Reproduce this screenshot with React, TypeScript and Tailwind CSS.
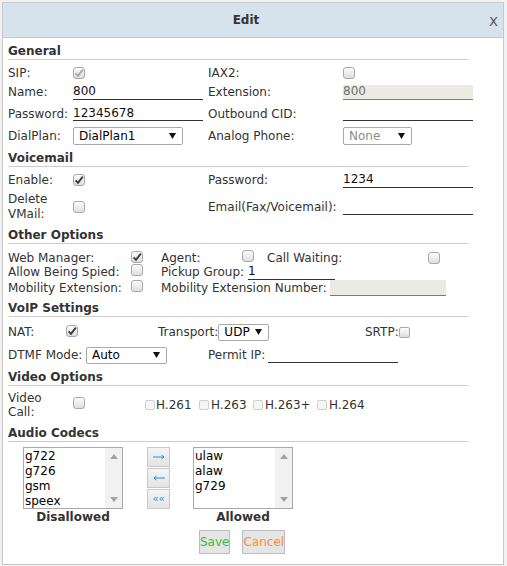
import React from "react";

type BoxProps = { checked?: boolean; dim?: boolean };

// checkbox as drawn in the old chrome skin
const Box = ({ checked, dim }: BoxProps) => (
  <span className="inline-flex h-[12px] w-[12px] shrink-0 items-center justify-center rounded-[3px] border border-[#a9a9a9] bg-linear-to-b from-[#fcfcfc] to-[#dedede]">
    {checked && (
      <svg width="10" height="10" viewBox="0 0 10 10">
        <path
          d="M1.6 5.4 L4 7.9 L8.8 1.6"
          fill="none"
          stroke={dim ? "#a9a9a9" : "#3b3b3b"}
          strokeWidth="1.9"
        />
      </svg>
    )}
  </span>
);

const SmallBox = () => (
  <span className="inline-block h-[10px] w-[10px] shrink-0 rounded-[2px] border border-[#cfcfcf] bg-[#f6f6f6]" />
);

type SelectProps = { value: string; className: string; dim?: boolean };

const Select = ({ value, className, dim }: SelectProps) => (
  <div
    className={`flex items-center justify-between rounded-[2px] border border-[#a9a9a9] bg-white pl-[5px] pr-[6px] ${className}`}
  >
    <span className={dim ? "text-[#8c8c8c]" : "text-black"}>{value}</span>
    <svg width="7" height="6" viewBox="0 0 7 6">
      <path d="M0 0 H7 L3.5 6 Z" fill="#111" />
    </svg>
  </div>
);

type LineProps = { value?: string; className: string; off?: boolean };

const Line = ({ value = "", className, off }: LineProps) => (
  <input
    readOnly
    value={value}
    className={`h-[15px] border-b px-0 text-[12px] leading-[15px] outline-none ${
      off
        ? "border-[#7d7d7d] bg-[#ebebe4] text-[#6d6d6d]"
        : "border-[#333] bg-transparent text-[#111]"
    } ${className}`}
  />
);

const Head = ({ title, pt }: { title: string; pt: string }) => (
  <div className={`${pt} border-b border-[#cccccc] text-[12px] font-bold leading-[16px] text-[#333]`}>
    {title}
  </div>
);

const Arrow = ({ up }: { up?: boolean }) => (
  <svg width="8" height="5" viewBox="0 0 8 5">
    <path d={up ? "M0 5 L4 0 L8 5 Z" : "M0 0 L8 0 L4 5 Z"} fill="#a3a3a3" />
  </svg>
);

const ListBox = ({ items }: { items: string[] }) => (
  <div className="flex h-[62px] w-[100px] border border-[#a9a9a9] bg-white">
    <div className="flex-1 pl-[1px] pt-[1px] text-[12px] leading-[15px] text-black">
      {items.map((item) => (
        <div key={item}>{item}</div>
      ))}
    </div>
    <div className="flex w-[17px] flex-col items-center justify-between bg-[#f1f1f1] py-[6px]">
      <Arrow up />
      <Arrow />
    </div>
  </div>
);

const MoveBtn = ({ children }: { children: React.ReactNode }) => (
  <div className="flex h-[20px] w-[23px] items-center justify-center border border-[#c9c9c9] bg-linear-to-b from-[#f4f4f4] to-[#e4e4e4] text-[#2b8fe0]">
    {children}
  </div>
);

const App = () => {
  return (
    <div className="h-[566px] w-[507px] overflow-hidden bg-[#f1f1f1] pl-[2px] pt-[2px] font-['DejaVu_Sans',sans-serif] text-[12px] text-[#333]">
      <div className="flex h-[563px] w-[502px] flex-col border border-[#c8c8c8] bg-white">
        {/* header */}
        <div className="relative flex h-[35px] shrink-0 items-center justify-center border-b border-[#c8c8c8] bg-[#d6e2ec] pr-[14px]">
          <span className="text-[12px] font-bold text-[#333]">Edit</span>
          <span className="absolute right-[5px] top-[9px] text-[13px] text-[#4a5563]">X</span>
        </div>

        <div className="w-[470px] px-[5px]">
          {/* General */}
          <Head title="General" pt="pt-[5px]" />
          <div className="grid grid-cols-[65px_135px_135px_130px]">
            <div className="mt-[4px] flex h-[18px] items-center">SIP:</div>
            <div className="mt-[4px] flex h-[18px] items-center">
              <Box checked dim />
            </div>
            <div className="mt-[4px] flex h-[18px] items-center">IAX2:</div>
            <div className="mt-[4px] flex h-[18px] items-center">
              <Box />
            </div>

            <div className="flex h-[20px] items-center">Name:</div>
            <div className="flex h-[20px] items-center">
              <Line value="800" className="w-[130px]" />
            </div>
            <div className="flex h-[20px] items-center">Extension:</div>
            <div className="flex h-[20px] items-center">
              <Line value="800" off className="w-[130px]" />
            </div>

            <div className="flex h-[23px] items-center">Password:</div>
            <div className="flex h-[23px] items-center">
              <Line value="12345678" className="w-[130px]" />
            </div>
            <div className="flex h-[23px] items-center">Outbound CID:</div>
            <div className="flex h-[23px] items-center">
              <Line className="w-[130px]" />
            </div>

            <div className="flex h-[22px] items-center">DialPlan:</div>
            <div className="flex h-[22px] items-center">
              <Select value="DialPlan1" className="h-[18px] w-[110px]" />
            </div>
            <div className="flex h-[22px] items-center">Analog Phone:</div>
            <div className="flex h-[22px] items-center">
              <Select value="None" dim className="h-[18px] w-[69px]" />
            </div>
          </div>

          {/* Voicemail */}
          <Head title="Voicemail" pt="pt-[3px]" />
          <div className="grid grid-cols-[65px_135px_135px_130px]">
            <div className="mt-[3px] flex h-[20px] items-center">Enable:</div>
            <div className="mt-[3px] flex h-[20px] items-center">
              <Box checked />
            </div>
            <div className="mt-[3px] flex h-[20px] items-center">Password:</div>
            <div className="mt-[3px] flex h-[20px] items-center">
              <Line value="1234" className="w-[130px]" />
            </div>

            <div className="flex h-[34px] items-center leading-[15px]">
              Delete
              <br />
              VMail:
            </div>
            <div className="flex h-[34px] items-center">
              <Box />
            </div>
            <div className="flex h-[34px] items-center">Email(Fax/Voicemail):</div>
            <div className="flex h-[34px] items-center">
              <Line className="w-[130px]" />
            </div>
          </div>

          {/* Other Options */}
          <Head title="Other Options" pt="pt-[3px]" />
          <div className="mt-[6px] flex h-[15px] items-center">
            <span className="w-[123px]">Web Manager:</span>
            <span className="w-[30px]">
              <Box checked />
            </span>
            <span className="w-[81px]">Agent:</span>
            <span className="w-[25px]">
              <Box />
            </span>
            <span className="w-[161px]">Call Waiting:</span>
            <Box />
          </div>
          <div className="flex h-[14px] items-center">
            <span className="w-[123px]">Allow Being Spied:</span>
            <span className="w-[30px]">
              <Box />
            </span>
            <span className="w-[87px]">Pickup Group:</span>
            <Line value="1" className="w-[87px]" />
          </div>
          <div className="flex h-[17px] items-center">
            <span className="w-[123px]">Mobility Extension:</span>
            <span className="w-[30px]">
              <Box />
            </span>
            <span className="w-[169px]">Mobility Extension Number:</span>
            <Line off className="h-[16px] w-[116px]" />
          </div>

          {/* VoIP Settings */}
          <Head title="VoIP Settings" pt="pt-[4px]" />
          <div className="mt-[6px] flex h-[18px] items-center">
            <span className="w-[58px]">NAT:</span>
            <span className="w-[92px]">
              <Box checked />
            </span>
            <span className="flex w-[207px] items-center">
              Transport:
              <Select value="UDP" className="h-[17px] w-[51px]" />
            </span>
            <span>SRTP:</span>
            <span className="inline-block h-[11px] w-[11px] rounded-[2px] border border-[#a9a9a9] bg-linear-to-b from-[#fcfcfc] to-[#dedede]" />
          </div>
          <div className="mt-[4px] flex h-[20px] items-center">
            <span className="w-[78px]">DTMF Mode:</span>
            <Select value="Auto" className="h-[17px] w-[81px]" />
            <span className="ml-[41px] w-[60px]">Permit IP:</span>
            <Line className="w-[130px]" />
          </div>

          {/* Video Options */}
          <Head title="Video Options" pt="pt-[4px]" />
          <div className="flex h-[38px] items-center">
            <span className="w-[65px] leading-[14px]">
              Video
              <br />
              Call:
            </span>
            <span className="w-[72px]">
              <Box />
            </span>
            <span className="flex w-[54px] items-center gap-[1px]">
              <SmallBox />
              H.261
            </span>
            <span className="flex w-[54px] items-center gap-[2px]">
              <SmallBox />
              H.263
            </span>
            <span className="flex w-[64px] items-center gap-[2px]">
              <SmallBox />
              H.263+
            </span>
            <span className="flex items-center gap-[2px]">
              <SmallBox />
              H.264
            </span>
          </div>

          {/* Audio Codecs */}
          <Head title="Audio Codecs" pt="pt-[1px]" />
          <div className="mt-[5px] flex items-start">
            <div className="ml-[15px] flex flex-col items-center">
              <ListBox items={["g722", "g726", "gsm", "speex"]} />
              <span className="font-bold leading-[16px] text-[#333]">Disallowed</span>
            </div>
            <div className="ml-[24px] flex flex-col gap-[1px]">
              <MoveBtn>
                <svg width="12" height="8" viewBox="0 0 12 8">
                  <path d="M0 4 H11 M8.5 2 L11 4 L8.5 6" fill="none" stroke="#2b8fe0" strokeWidth="1" />
                </svg>
              </MoveBtn>
              <MoveBtn>
                <svg width="12" height="8" viewBox="0 0 12 8">
                  <path d="M12 4 H1 M3.5 2 L1 4 L3.5 6" fill="none" stroke="#2b8fe0" strokeWidth="1" />
                </svg>
              </MoveBtn>
              <MoveBtn>
                <span className="text-[10px] leading-[10px]">««</span>
              </MoveBtn>
            </div>
            <div className="ml-[23px] flex flex-col items-center">
              <ListBox items={["ulaw", "alaw", "g729"]} />
              <span className="font-bold leading-[16px] text-[#333]">Allowed</span>
            </div>
          </div>
          <div className="mt-[5px] flex gap-[12px] pl-[191px]">
            <button className="h-[24px] border border-[#bdbdbd] bg-[#e5e5e5] px-0 text-[12px] text-[#3dba44]">
              Save
            </button>
            <button className="h-[24px] border border-[#bdbdbd] bg-[#e5e5e5] px-0 text-[12px] text-[#ff8a3d]">
              Cancel
            </button>
          </div>
        </div>
      </div>
    </div>
  );
};

export default App;
